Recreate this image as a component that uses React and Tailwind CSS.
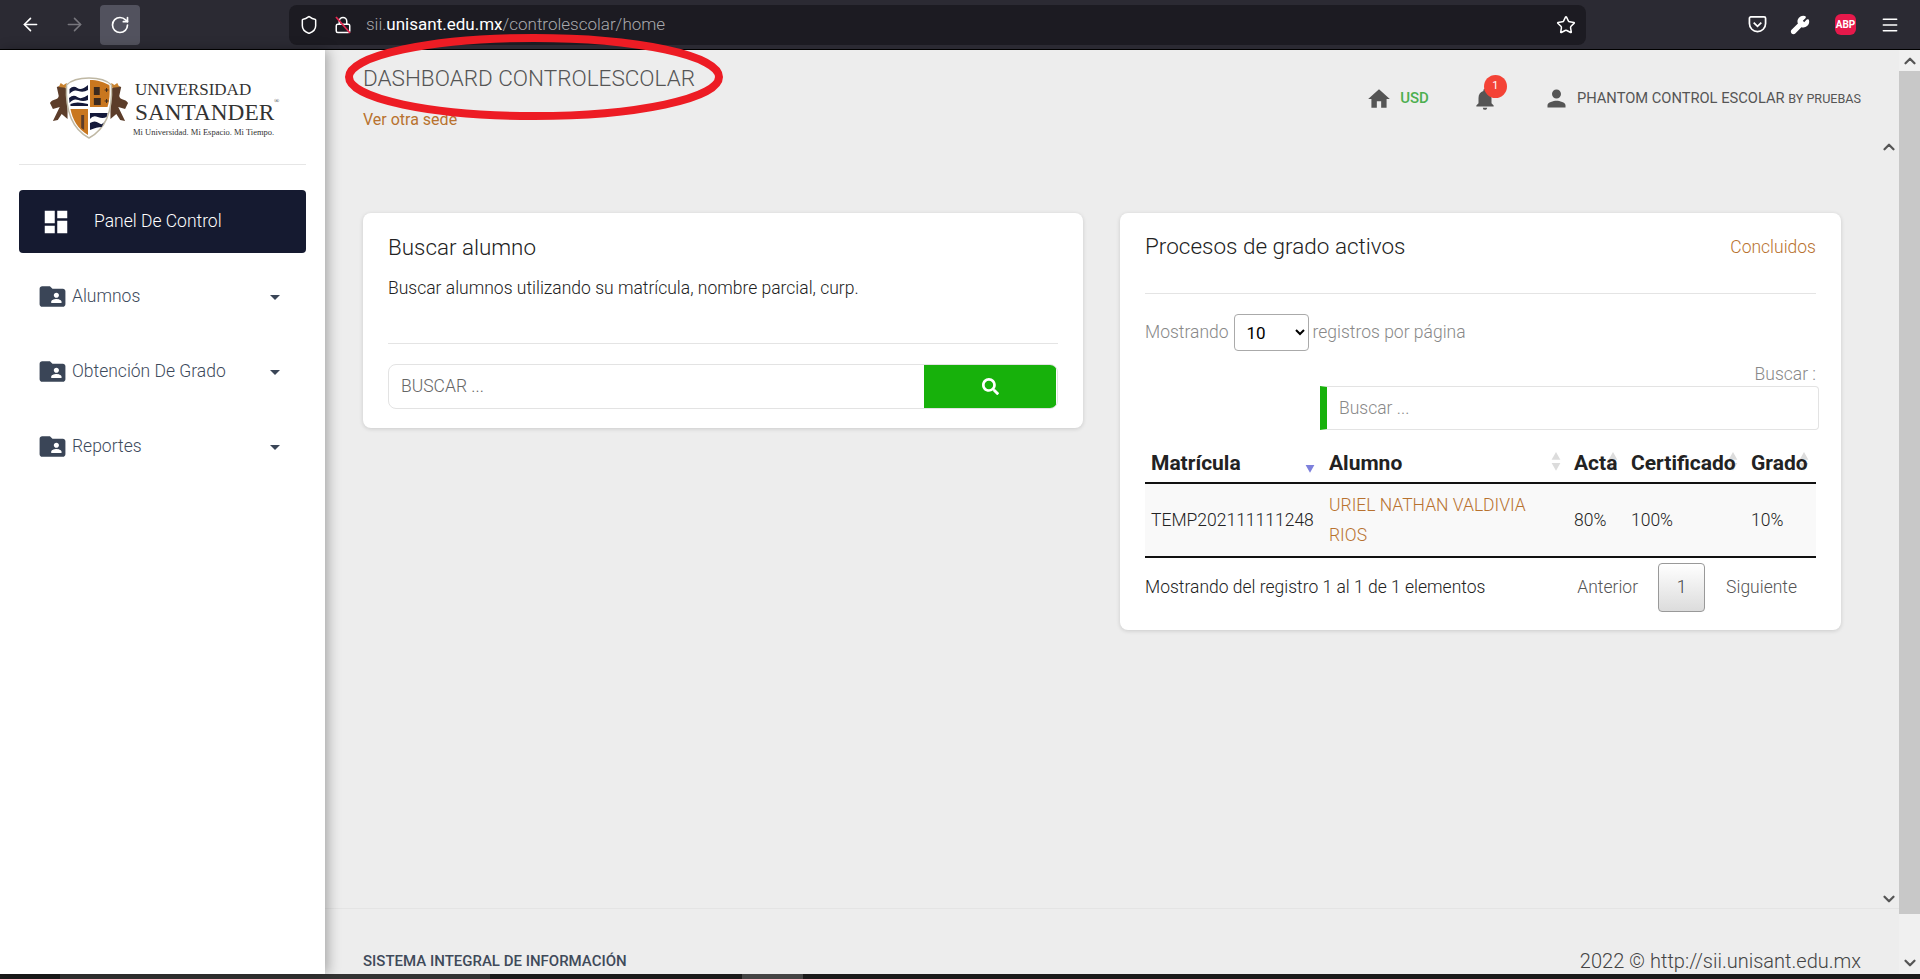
import React from 'react';
import { ArrowLeft, ArrowRight, RotateCw, Shield, Lock, Star, Wrench, Menu, ChevronUp, ChevronDown } from 'lucide-react';
import { MdHome, MdNotifications, MdPerson, MdFolderShared, MdDashboard, MdArrowDropDown } from 'react-icons/md';
import { FaSearch } from 'react-icons/fa';

const navItems = ['Alumnos', 'Obtención De Grado', 'Reportes'];

const SortArrows = ({ active }) => (
    <svg viewBox="0 0 10 20" className="w-[12px] h-[22px] shrink-0">
        {!active && <path d="M5 1 L9 8 H1 Z" fill="#dcdcdc" />}
        <path d="M1 11 H9 L5 18 Z" fill={active ? '#7d80dc' : '#dcdcdc'} />
    </svg>
);

const Crest = () => (
    <svg viewBox="0 0 82 62" className="w-[80px] h-[62px] shrink-0" preserveAspectRatio="none">
        {/* lions */}
        <path d="M1 26 C4 21 9 24 10 19 L8 10 L14 8 L19 13 L19 42 L13 37 L9 43 L4 44 L8 36 L11 30 L4 32 Z" fill="#5c3d2a" />
        <path d="M81 26 C78 21 73 24 72 19 L74 10 L68 8 L63 13 L63 42 L69 37 L73 43 L78 44 L74 36 L71 30 L78 32 Z" fill="#5c3d2a" />
        <path d="M10 10 L12 6 L15 8 L18 6 L19 11 Z M72 10 L70 6 L67 8 L64 6 L63 11 Z" fill="#c9822e" />
        {/* shield */}
        <path d="M41 1 C31 1 22 4 18 8 C17 26 20 50 41 61 C62 50 65 26 64 8 C60 4 51 1 41 1 Z" fill="#fff" stroke="#bfb8a4" strokeWidth="1.5" />
        <path d="M42 3 C49 3 57 5 62 8.500 C62.500 16 62 24 60 30 H42 Z" fill="#c9771f" />
        <path d="M40 32 H22 C24 42 29 52 40 58 Z" fill="#c9771f" />
        <path d="M20 9.500 C25 6 33 3.500 40 3 V30 H21 C20 24 19.500 16 20 9.500 Z" fill="#fff" />
        <path d="M21 12 Q25 8 29 11 T40 8 V13 Q35 16 30 14 T21 17 Z M20.500 21 Q25 17 29 20 T40 18 V23 Q35 25 30 23 T21 26 Z M42 36 H60 L59 40 Q55 42 50 40 T42 42 Z M42 46 Q47 43 51 46 T57 44 L54 50 Q49 50 42 53 Z" fill="#14193a" />
        <path d="M22 27 Q28 24 40 27 V29 H22 Z" fill="#14193a" />
        <path d="M46 10 H52 V18 H46 Z M46 21 H53 V28 H46 Z" fill="#3c2a1e" />
        <path d="M57 13 H61 M59 11 V15 M57 24 H61 M59 22 V26" stroke="#3c2a1e" strokeWidth="1" />
        <path d="M33 38 L36 38 L36 53 L33 51 Z" fill="#5c3d2a" />
        <path d="M41 3 V58" stroke="#fff" strokeWidth="1.500" />
    </svg>
);

const Logo = () => (
    <div className="flex items-start h-[62px] pl-[49px] pt-[27px] box-content">
        <Crest />
        <div className="ml-[4px] flex flex-col text-[#333] font-['Liberation_Serif',serif] whitespace-nowrap">
            <span className="text-[17px] leading-[20px] mt-[3px] ml-[2px]">UNIVERSIDAD</span>
            <span className="relative text-[23.300px] leading-[24px] ml-[2px]">
                SANTANDER
                <span className="absolute -top-[3px] left-[139px] text-[7px] leading-[8px]">®</span>
            </span>
            <span className="text-[8.500px] leading-[10px] mt-[3px]">Mi Universidad. Mi Espacio. Mi Tiempo.</span>
        </div>
    </div>
);

const BrowserBar = () => (
    <div className="h-[50px] shrink-0 bg-[#2b2a33] border-b border-black flex items-center pl-[20px] pr-[20px] text-white">
        <ArrowLeft size={21} strokeWidth={1.8} className="shrink-0" />
        <ArrowRight size={21} strokeWidth={1.8} className="shrink-0 ml-[23px] text-[#77767d]" />
        <div className="ml-[15px] w-[40px] h-[40px] rounded bg-[#52525e] flex items-center justify-center shrink-0">
            <RotateCw size={20} strokeWidth={2} />
        </div>
        <div className="ml-[149px] w-[1308px] h-[40px] rounded-lg bg-[#1c1b22] flex items-center pl-[10px] pr-[10px]">
            <Shield size={20} strokeWidth={1.8} className="shrink-0" />
            <div className="relative ml-[15px] shrink-0">
                <Lock size={18} strokeWidth={2} />
                <svg viewBox="0 0 18 18" className="absolute inset-0 w-[18px] h-[18px]"><path d="M2 1 L16 17" stroke="#e22850" strokeWidth="1.800" /></svg>
            </div>
            <span className="ml-[14px] text-[#a9a9ad] text-[17px] font-['Roboto',sans-serif] font-light">sii.<span className="text-white font-normal">unisant.edu.mx</span>/controlescolar/home</span>
            <Star size={20} strokeWidth={1.8} className="ml-auto" />
        </div>
        <svg viewBox="0 0 20 20" className="ml-[162px] w-[19px] h-[19px] shrink-0" fill="none" stroke="#fff" strokeWidth="1.800">
            <path d="M3 2 H17 A1.500 1.500 0 0 1 18.500 3.500 V9 A8.500 8.500 0 0 1 1.500 9 V3.500 A1.500 1.500 0 0 1 3 2 Z" />
            <path d="M6 8 L10 12 L14 8" />
        </svg>
        <Wrench size={20} strokeWidth={2} fill="#fff" className="ml-[23px] shrink-0" />
        <div className="ml-[25px] w-[21px] h-[21px] bg-[#e6194b] rounded-md flex items-center justify-center text-[10px] font-bold font-['Roboto',sans-serif] shrink-0">ABP</div>
        <Menu size={20} strokeWidth={1.8} className="ml-[24px] shrink-0" />
    </div>
);

const Sidebar = () => (
    <aside className="w-[325px] shrink-0 bg-white shadow-[3px_0_12px_rgba(0,0,0,0.3)] z-10 flex flex-col font-['Roboto',sans-serif]">
        <Logo />
        <div className="mx-[19px] mt-[25px] border-t border-[#e6e6e6]" />
        <div className="mx-[19px] mt-[25px] h-[63px] rounded bg-[#151a30] text-white flex items-center pl-[25px] shrink-0">
            <MdDashboard size={30} className="shrink-0 -ml-[3px]" />
            <span className="ml-[23px] text-[17.500px] font-light">Panel De Control</span>
        </div>
        <div className="flex flex-col">
            {navItems.map((item) => (
                <div key={item} className="h-[75px] flex items-center ml-[37px] pt-[12px] text-[#3d4a5c]">
                    <MdFolderShared size={31} className="shrink-0 text-[#3a4557]" />
                    <span className="ml-[4px] text-[17.500px] font-light">{item}</span>
                    <MdArrowDropDown size={24} className="ml-auto mr-[38px] shrink-0 text-[#3a4557]" />
                </div>
            ))}
        </div>
    </aside>
);

const Header = () => (
    <div className="h-[88px] shrink-0 flex pl-[38px] pr-[38px]">
        <div className="pt-[14px]">
            <h1 className="text-[22.500px] leading-[28px] font-light text-[#555]">DASHBOARD CONTROLESCOLAR</h1>
            <a className="block mt-[20px] text-[16px] leading-[16px] text-[#b8722f]">Ver otra sede</a>
        </div>
        <div className="ml-auto flex items-center h-[80px] pt-[17px] text-[#555]">
            <MdHome size={26} className="shrink-0" />
            <span className="ml-[8px] text-[15px] font-medium text-[#4caf50]">USD</span>
            <div className="relative ml-[43px]">
                <MdNotifications size={26} className="shrink-0" />
                <span className="absolute -top-[11px] left-[12px] w-[23px] h-[23px] rounded-full bg-[#f44336] text-white text-[11px] flex items-center justify-center">1</span>
            </div>
            <MdPerson size={27} className="ml-[45px] shrink-0" />
            <span className="ml-[7px] text-[14.700px] whitespace-nowrap">PHANTOM CONTROL ESCOLAR <span className="text-[12.600px]">BY PRUEBAS</span></span>
        </div>
    </div>
);

const SearchCard = () => (
    <div className="w-[720px] h-[215px] shrink-0 bg-white rounded-lg shadow-[0_1px_4px_rgba(0,0,0,0.15)] px-[25px] pt-[20px]">
        <h3 className="text-[22.400px] leading-[28px] font-light text-[#222]">Buscar alumno</h3>
        <p className="mt-[13px] text-[17.500px] leading-[28px] font-light text-[#222]">Buscar alumnos utilizando su matrícula, nombre parcial, curp.</p>
        <div className="mt-[41px] border-t border-[#e4e4e4]" />
        <div className="mt-[20px] h-[45px] flex border border-[#e3e3e3] rounded-lg overflow-hidden">
            <input placeholder="BUSCAR ..." className="flex-1 min-w-0 px-[12px] text-[17.500px] font-light outline-none placeholder:text-[#666]" />
            <div className="w-[132px] bg-[#17b10b] text-white flex items-center justify-center mr-[1px]">
                <FaSearch size={17} />
            </div>
        </div>
    </div>
);

const GradeCard = () => (
    <div className="w-[721px] h-[417px] shrink-0 bg-white rounded-lg shadow-[0_1px_4px_rgba(0,0,0,0.15)] px-[25px] pt-[20px]">
        <div className="flex justify-between items-center h-[28px]">
            <h3 className="text-[22.500px] font-light text-[#222]">Procesos de grado activos</h3>
            <a className="text-[17.500px] font-light text-[#b8722f]">Concluidos</a>
        </div>
        <div className="mt-[32px] border-t border-[#e4e4e4]" />
        <div className="mt-[20px] flex items-center h-[37px] text-[17.500px] font-light text-[#888]">
            Mostrando
            <select className="ml-[5px] mr-[4px] w-[75px] h-[37px] bg-white border border-[#aaa] rounded pl-[8px] text-[17px] font-normal text-black">
                <option>10</option>
            </select>
            registros por página
        </div>
        <div className="mt-[13px] text-right text-[17.500px] leading-[20px] font-light text-[#888]">Buscar :</div>
        <div className="ml-[175px] -mr-[3px] mt-[2px]">
            <input placeholder="Buscar ..." className="w-full h-[44px] border border-[#e3e3e3] border-l-[7px] border-l-[#17b10b] rounded-r pl-[12px] text-[17.500px] font-light outline-none placeholder:text-[#888]" />
        </div>
        <table className="w-[671px] table-fixed mt-[16px] text-[17.500px] text-[#222]">
            <colgroup>
                <col className="w-[178px]" />
                <col className="w-[245px]" />
                <col className="w-[57px]" />
                <col className="w-[120px]" />
                <col className="w-[71px]" />
            </colgroup>
            <thead>
                <tr className="h-[37px] border-b-2 border-[#111] text-[21px] text-left">
                    <th className="relative pl-[6px] font-bold">
                        Matrícula
                        <span className="absolute right-[7px] top-[7px]"><SortArrows active /></span>
                    </th>
                    <th className="relative pl-[6px] font-bold">
                        Alumno
                        <span className="absolute right-[6px] top-[5px]"><SortArrows /></span>
                    </th>
                    <th className="relative pl-[6px] font-bold whitespace-nowrap">
                        <span className="absolute right-[6px] top-[5px]"><SortArrows /></span>
                        <span className="relative">Acta</span>
                    </th>
                    <th className="relative pl-[6px] font-bold whitespace-nowrap">
                        <span className="absolute right-[6px] top-[5px]"><SortArrows /></span>
                        <span className="relative">Certificado</span>
                    </th>
                    <th className="relative pl-[6px] font-bold whitespace-nowrap">
                        <span className="absolute right-[6px] top-[5px]"><SortArrows /></span>
                        <span className="relative">Grado</span>
                    </th>
                </tr>
            </thead>
            <tbody>
                <tr className="h-[74px] bg-[#f9f9f9] border-b-2 border-[#111] font-light">
                    <td className="pl-[6px] whitespace-nowrap">TEMP202111111248</td>
                    <td className="pl-[6px] pr-[30px] text-[#b8722f] leading-[30px]">URIEL NATHAN VALDIVIA RIOS</td>
                    <td className="pl-[6px]">80%</td>
                    <td className="pl-[6px]">100%</td>
                    <td className="pl-[6px]">10%</td>
                </tr>
            </tbody>
        </table>
        <div className="flex items-center mt-[5px] text-[17.500px] font-light">
            <span className="text-[#222] -mt-[1px]">Mostrando del registro 1 al 1 de 1 elementos</span>
            <span className="ml-auto text-[#555]">Anterior</span>
            <span className="ml-[20px] w-[47px] h-[49px] flex items-center justify-center border border-[#999] rounded-sm bg-gradient-to-b from-white to-[#dcdcdc] text-[#444]">1</span>
            <span className="ml-[21px] mr-[19px] text-[#555]">Siguiente</span>
        </div>
    </div>
);

const Footer = () => (
    <div className="mt-auto h-[66px] shrink-0 border-t border-[#e4e4e4] flex items-end justify-between pl-[38px] pr-[38px]">
        <span className="text-[15px] leading-[26px] font-medium text-[#3f4a5a]">SISTEMA INTEGRAL DE INFORMACIÓN</span>
        <span className="text-[20px] leading-[26px] font-light text-[#444]">2022 © http://sii.unisant.edu.mx</span>
    </div>
);

const App = () => {
    return (
        <div className="relative h-screen flex flex-col overflow-hidden bg-[#ededed] font-['Roboto',sans-serif]">
            <BrowserBar />
            <div className="flex-1 min-h-0 flex">
                <Sidebar />
                <div className="flex-1 min-w-0 flex flex-col">
                    <Header />
                    <div className="flex gap-[37px] pl-[38px] mt-[75px]">
                        <SearchCard />
                        <GradeCard />
                    </div>
                    <Footer />
                </div>
                {/* inner + outer scrollbars */}
                <div className="w-[21px] shrink-0 flex flex-col items-center text-[#555] pt-[88px] pb-[66px] justify-between -ml-[21px] z-10">
                    <ChevronUp size={18} strokeWidth={3} />
                    <ChevronDown size={18} strokeWidth={3} />
                </div>
                <div className="w-[21px] shrink-0 flex flex-col text-[#555]">
                    <div className="h-[21px] flex items-center justify-center bg-[#f0f0f0]"><ChevronUp size={18} strokeWidth={3} /></div>
                    <div className="h-[843px] bg-[#c8c8c8]" />
                    <div className="flex-1 flex items-end justify-center bg-[#f0f0f0] pb-[2px]"><ChevronDown size={18} strokeWidth={3} /></div>
                </div>
            </div>
            <div className="h-[5px] shrink-0 bg-[#1a1a1a] flex">
                <div className="ml-[60px] w-[430px] bg-[#333]" />
                <div className="ml-[252px] w-[61px] bg-[#444]" />
            </div>
            {/* hand-drawn annotation over the page */}
            <svg viewBox="0 0 380 88" className="absolute left-[344px] top-[33px] w-[380px] h-[88px] pointer-events-none z-20">
                <ellipse cx="190" cy="44" rx="185" ry="39" fill="none" stroke="#ed1c24" strokeWidth="8" />
            </svg>
        </div>
    );
};

export default App;
